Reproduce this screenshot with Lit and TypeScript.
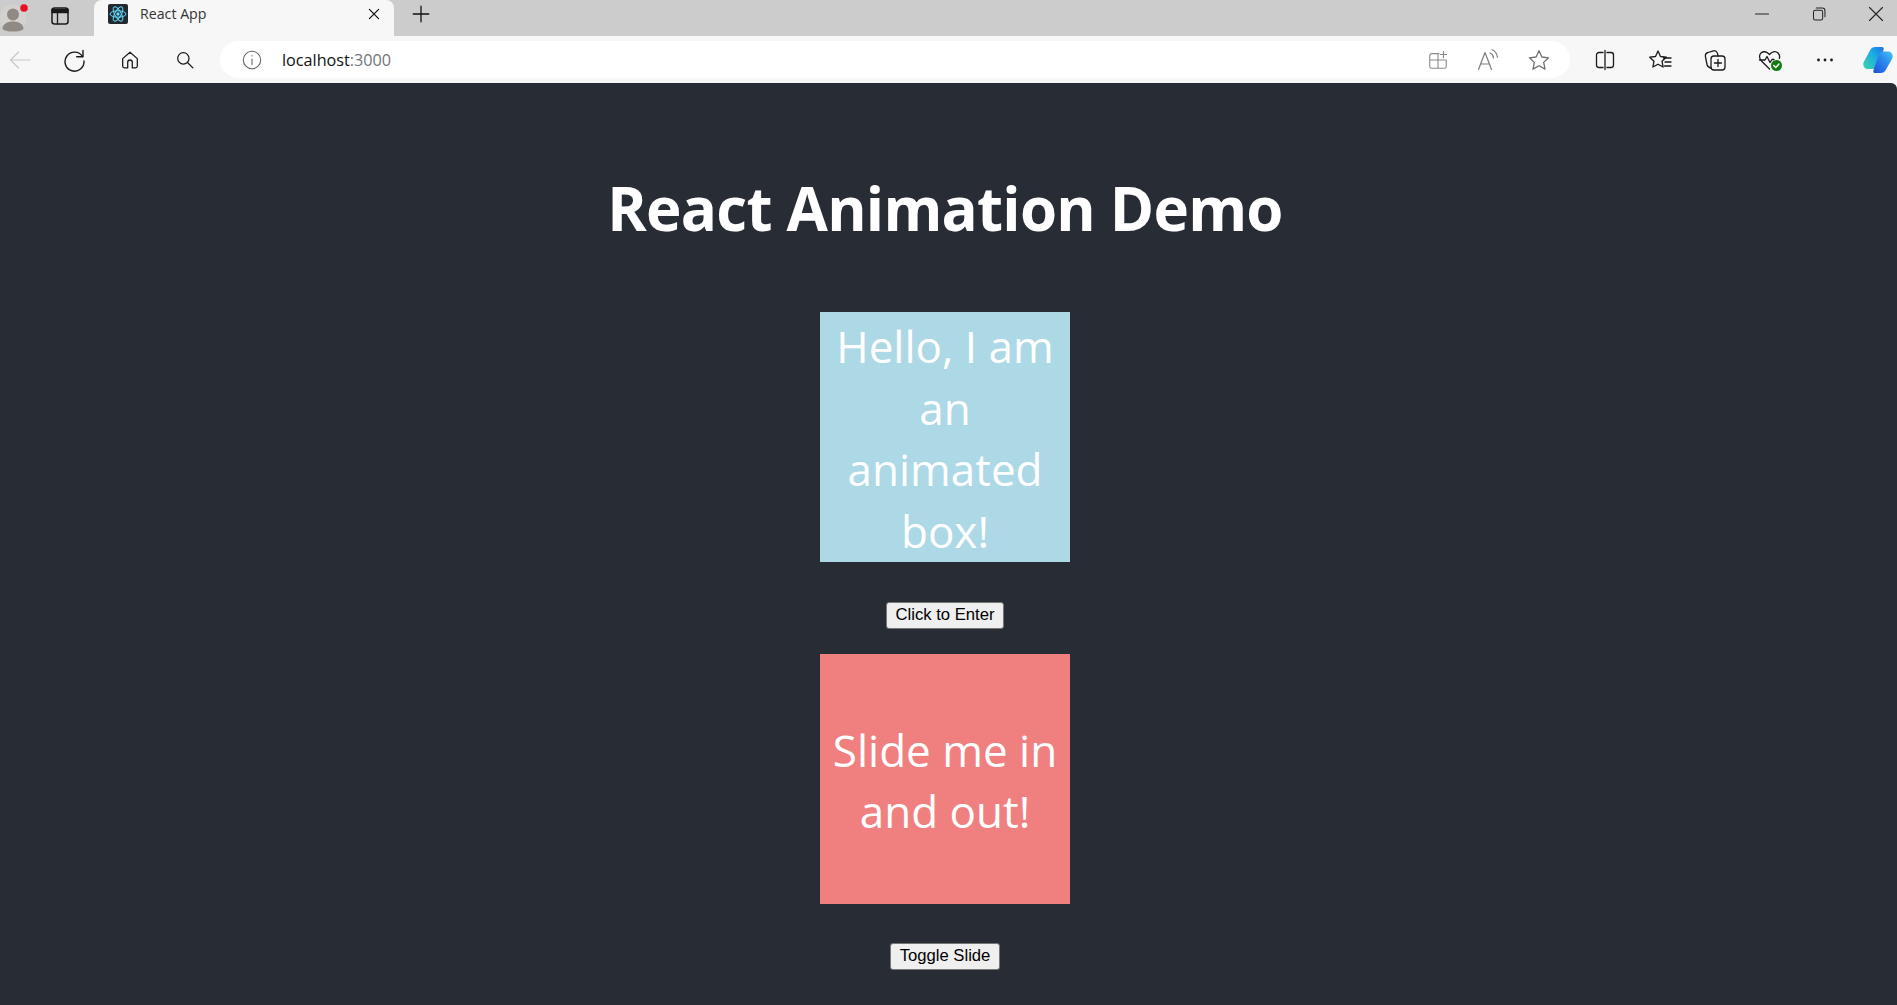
import { LitElement, html, css, svg } from 'lit';
import { customElement } from 'lit/decorators.js';

const stroke = (body: unknown, size = 24, color = '#1a1a1a', width = 1.3) => html`<svg
  width=${size} height=${size} viewBox="0 0 24 24" fill="none" stroke=${color} stroke-width=${width}
  stroke-linecap="round" stroke-linejoin="round">${body}</svg>`;

const icons = {
  avatar: html`<svg width="28" height="28" viewBox="0 0 28 28">
    <circle cx="13" cy="14" r="13.5" fill="#d4d2cf"/>
    <circle cx="13" cy="10.5" r="6" fill="#8f8a84"/>
    <path d="M2.5 25c0-5 4.5-7.5 10.5-7.5S23.500 20 23.500 25c-2 2-6 2.500-10.500 2.500S4.500 27 2.500 25z" fill="#8f8a84"/>
    <circle cx="24" cy="4" r="3.800" fill="#e81123"/>
  </svg>`,
  verticalTabs: stroke(svg`<rect x="4" y="4" width="16" height="16" rx="2.500" stroke-width="1.500"/>
    <path d="M4 5.500h16v3H4z" fill="#1a1a1a"/><path d="M9.500 8v12"/>`),
  react: html`<svg width="20" height="20" viewBox="0 0 20 20">
    <rect width="20" height="20" rx="2" fill="#22282e"/>
    <g fill="none" stroke="#61dafb" stroke-width="1">
      <ellipse cx="10" cy="10" rx="8" ry="3.200"/>
      <ellipse cx="10" cy="10" rx="8" ry="3.200" transform="rotate(60 10 10)"/>
      <ellipse cx="10" cy="10" rx="8" ry="3.200" transform="rotate(120 10 10)"/>
    </g>
    <circle cx="10" cy="10" r="1.700" fill="#61dafb"/>
  </svg>`,
  close: stroke(svg`<path d="M6.500 6.500l11 11M17.500 6.500l-11 11"/>`, 20, '#111', 1.500),
  plus: stroke(svg`<path d="M12 3.500v17M3.500 12h17"/>`, 22, '#111', 1.400),
  minimize: stroke(svg`<path d="M5.500 12h13"/>`, 24, '#222', 1.100),
  restore: stroke(svg`<rect x="6" y="8" width="10" height="10.500" rx="2"/><path d="M9 5.500h6.500A3 3 0 0 1 18.500 8.500V15"/>`, 22, '#222', 1.100),
  winClose: stroke(svg`<path d="M5.500 5.500l13 13M18.500 5.500l-13 13"/>`, 24, '#222', 1.100),
  back: stroke(svg`<path d="M22 12H2.500M10.500 4l-8 8 8 8"/>`, 24, '#c9c9c9', 1.200),
  reload: stroke(svg`<path d="M19.500 8.500A9.500 9.500 0 1 0 21 13"/><path d="M20 2.500v6.300h-6.300"/>`, 24, '#1a1a1a', 1.400),
  home: stroke(svg`<path d="M4 10.500L12 3.500l8 7v8a2 2 0 0 1-2 2h-3.500v-6a2.500 2.500 0 0 0-5 0v6H6a2 2 0 0 1-2-2z"/>`, 22, '#1a1a1a', 1.400),
  search: stroke(svg`<circle cx="10" cy="10" r="6.800"/><path d="M15 15l6.500 6.500"/>`, 20, '#1a1a1a', 1.500),
  info: stroke(svg`<circle cx="12" cy="12" r="9.500"/><path d="M12 11v6M12 7.200v.3"/>`, 22, '#666', 1.200),
  apps: stroke(svg`<path d="M13 5H5a2 2 0 0 0-2 2v12a2 2 0 0 0 2 2h14a2 2 0 0 0 2-2v-7H3M12 5v16"/><path d="M18 2.500v7M14.500 6h7"/>`, 22, '#8a8a8a', 1.200),
  read: html`<svg width="24" height="24" viewBox="0 0 24 24" fill="none" stroke="#7c7c7c" stroke-width="1.200" stroke-linecap="round" stroke-linejoin="round">
    <path d="M2.500 21.500L9 4.500 15.500 21.500M5 16h8"/>
    <path d="M14 5c2 .8 3.200 2.500 3.500 4.800M16 1.800c3.200 1.200 5 3.900 5.400 7.500"/>
  </svg>`,
  star: stroke(svg`<path d="M12 2.800l2.900 6.200 6.700.8-4.900 4.600 1.300 6.700L12 17.700l-6 3.400 1.300-6.700-4.900-4.600 6.700-.8z"/>`, 24, '#6e6e6e', 1.300),
  split: stroke(svg`<path d="M10 4.500H6a2.500 2.500 0 0 0-2.500 2.500v10A2.500 2.500 0 0 0 6 19.500h4M14 4.500h4a2.500 2.500 0 0 1 2.500 2.500v10a2.500 2.500 0 0 1-2.500 2.500h-4M12 2.500v19"/>`, 24, '#1a1a1a', 1.300),
  favorites: stroke(svg`<path d="M10 3l2.500 5.500 5.800.7-4.300 4 1.100 5.800L10 16.200 4.900 19l1.100-5.800-4.300-4 5.800-.7zM15.500 10H23M17 14h6M16.500 18H23"/>`, 24, '#1a1a1a', 1.300),
  collections: stroke(svg`<rect x="8" y="8" width="14" height="14" rx="3"/><path d="M15 11.500v7M11.500 15h7"/><path d="M8 20c-2-.5-3.500-1.500-4-3.500L2.500 9C2 6.500 3 5 5 4.500l5.500-1.700c1.800-.4 3 .5 4 2.500l.6 2.700"/>`, 24, '#1a1a1a', 1.300),
  health: html`<svg width="26" height="26" viewBox="0 0 26 26" fill="none">
    <path d="M12.500 22L4.500 14C2 11.500 2 7.800 4 6s5.500-2 8.500 1.500C15.500 4 19 4 21 6c1.500 1.500 2 3.500 1.300 5.500" stroke="#1a1a1a" stroke-width="1.300" stroke-linecap="round" stroke-linejoin="round"/>
    <path d="M2.500 13H8l2-3.500 3 6 2-3h2" stroke="#1a1a1a" stroke-width="1.300" stroke-linecap="round" stroke-linejoin="round"/>
    <circle cx="19.500" cy="18.500" r="5.500" fill="#107c10"/>
    <path d="M16.800 18.600l2 1.900 3.200-3.500" stroke="#fff" stroke-width="1.500" stroke-linecap="round" stroke-linejoin="round"/>
  </svg>`,
  more: html`<svg width="20" height="20" viewBox="0 0 20 20" fill="#1a1a1a">
    <circle cx="3.500" cy="10" r="1.400"/><circle cx="10" cy="10" r="1.400"/><circle cx="16.500" cy="10" r="1.400"/>
  </svg>`,
  copilot: html`<svg width="30" height="26" viewBox="0 0 30 26">
    <defs>
      <linearGradient id="cp1" x1="0" y1="1" x2="1" y2="0"><stop offset="0" stop-color="#3fd6a5"/><stop offset=".6" stop-color="#1aa9e8"/><stop offset="1" stop-color="#2170e0"/></linearGradient>
      <linearGradient id="cp2" x1="0" y1="1" x2="1" y2="0"><stop offset="0" stop-color="#1e4fd8"/><stop offset=".6" stop-color="#2b8ff0"/><stop offset="1" stop-color="#49c6f2"/></linearGradient>
    </defs>
    <path d="M7 3.500C8 1 10 0 12.500 0H19c1.500 0 2 1.500 1.500 2.800l-5 16C15 20.500 13 22 11 22H5C1.800 22-.5 19 .5 15.500z" fill="url(#cp1)"/>
    <path d="M23 22.500C22 25 20 26 17.500 26H12c-1.500 0-2-1.500-1.500-2.800l5-15C16.200 6 18 4.500 20 4.500h5c3.200 0 5.500 3 4.500 6.500z" fill="url(#cp2)"/>
  </svg>`,
};

@customElement('app-root')
export class AppRoot extends LitElement {
  render() {
    return html`
      <div class="tabstrip">
        <span class="avatar">${icons.avatar}</span>
        <span class="strip-btn">${icons.verticalTabs}</span>
        <div class="tab">
          ${icons.react}
          <span class="tab-title">React App</span>
          <span class="tab-close">${icons.close}</span>
        </div>
        <span class="new-tab">${icons.plus}</span>
        <div class="window-controls">
          <span>${icons.minimize}</span>
          <span>${icons.restore}</span>
          <span>${icons.winClose}</span>
        </div>
      </div>
      <div class="toolbar">
        <span class="back">${icons.back}</span>
        <div class="nav">
          <span>${icons.reload}</span>
          <span>${icons.home}</span>
          <span>${icons.search}</span>
        </div>
        <div class="address">
          <span class="info">${icons.info}</span>
          <span class="url">localhost<span class="port">:3000</span></span>
          <div class="address-actions">
            <span>${icons.apps}</span>
            <span>${icons.read}</span>
            <span>${icons.star}</span>
          </div>
        </div>
        <div class="tools">
          <span>${icons.split}</span>
          <span>${icons.favorites}</span>
          <span>${icons.collections}</span>
          <span>${icons.health}</span>
          <span>${icons.more}</span>
          <span class="copilot">${icons.copilot}</span>
        </div>
      </div>
      <main class="page">
        <h1>React Animation Demo</h1>
        <div class="box blue">Hello, I am an animated box!</div>
        <button>Click to Enter</button>
        <div class="box red">Slide me in and out!</div>
        <button class="toggle">Toggle Slide</button>
      </main>
    `;
  }

  static styles = css`
    :host {
      display: block;
      height: 1005px;
      overflow: hidden;
      background: #f7f7f7;
      font-family: 'Open Sans', 'Noto Sans', sans-serif;
    }

    .tabstrip {
      height: 36px;
      background: #cccccc;
      display: flex;
      align-items: center;
    }
    .avatar {
      width: 28px;
      height: 28px;
      margin-right: 20px;
    }
    .strip-btn {
      width: 24px;
      height: 24px;
      margin-right: 22px;
      margin-top: -4px;
    }
    .tab {
      align-self: stretch;
      width: 300px;
      background: #f7f7f7;
      border-radius: 8px 8px 0 0;
      box-sizing: border-box;
      padding: 0 10px 8px 14px;
      display: flex;
      align-items: center;
    }
    .tab-title {
      flex: 1;
      margin-left: 12px;
      margin-top: -2px;
      font-family: 'Open Sans', sans-serif;
      font-size: 14.200px;
      color: #333;
    }
    .tab-close {
      height: 20px;
    }
    .new-tab {
      margin-left: 16px;
      height: 22px;
      margin-top: -8px;
    }
    .window-controls {
      margin-left: auto;
      display: flex;
      margin-top: -8px;
      margin-right: -7px;
    }
    .window-controls span {
      width: 57px;
      height: 24px;
      display: flex;
      justify-content: center;
      align-items: center;
    }

    .toolbar {
      height: 47px;
      display: flex;
      align-items: center;
    }
    .toolbar span {
      display: flex;
      align-items: center;
      justify-content: center;
    }
    .back {
      width: 40px;
      margin-right: 7px;
    }
    .nav {
      display: flex;
      margin-right: 8px;
    }
    .nav span {
      width: 55px;
    }
    .address {
      width: 1350px;
      height: 37px;
      flex: none;
      background: #fff;
      border-radius: 19px;
      display: flex;
      align-items: center;
    }
    .toolbar .info {
      width: 22px;
      margin-left: 21px;
    }
    .toolbar .url {
      display: inline;
      margin-left: 19px;
      font-size: 16.200px;
      color: #111;
    }
    .toolbar .port {
      display: inline;
      color: #70757a;
    }
    .address-actions {
      margin-left: auto;
      display: flex;
      margin-right: 6px;
    }
    .address-actions span {
      width: 50.500px;
    }
    .tools {
      display: flex;
      margin-left: 7px;
    }
    .tools span {
      width: 55px;
    }
    .tools .copilot {
      width: 45px;
      padding-left: 7px;
      box-sizing: border-box;
    }

    .page {
      height: 922px;
      background: #282c34;
      border-radius: 0 6px 0 0;
      box-sizing: border-box;
      padding: 0 7px 0 0;
      display: flex;
      flex-direction: column;
      align-items: center;
      color: #fff;
    }
    h1 {
      margin: 78px 0 0;
      height: 151px;
      font-size: 60px;
      line-height: 50px;
      padding-top: 22px;
      box-sizing: border-box;
      font-weight: 700;
      letter-spacing: -0.750px;
      font-family: 'Open Sans', sans-serif;
    }
    .box {
      width: 250px;
      height: 250px;
      flex: none;
      box-sizing: border-box;
      padding: 4px 10px 0;
      display: flex;
      align-items: center;
      justify-content: center;
      text-align: center;
      font-size: 44px;
      line-height: 61.500px;
    }
    .blue {
      background: #add8e6;
    }
    .red {
      background: #f08080;
    }
    button {
      margin: 40px 0 25.500px;
      height: 26.500px;
      padding: 0 8px;
      font: 16.670px 'Liberation Sans', Arial, sans-serif;
      color: #000;
      background: #efefef;
      border: 1px solid #767676;
      border-radius: 3px;
    }
    .toggle {
      margin-top: 39px;
      padding: 0 9px;
    }
  `;
}
